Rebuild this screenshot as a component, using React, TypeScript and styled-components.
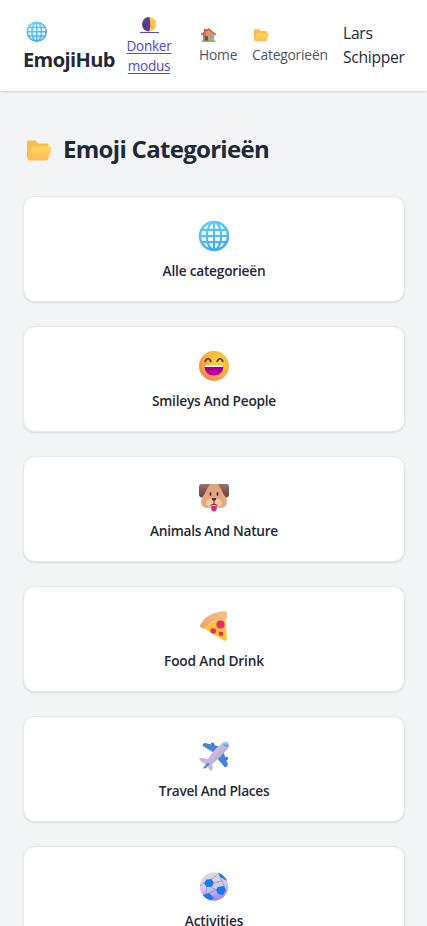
import React from "react";
import styled, { createGlobalStyle } from "styled-components";

const GlobalStyle = createGlobalStyle`
  *, *::before, *::after { box-sizing: border-box; }
  body {
    margin: 0;
    background: #f3f4f6;
    color: #1f2937;
    font-family: "Segoe UI", "Open Sans", "Noto Sans", sans-serif;
    font-size: 16px;
    line-height: 24px;
    overflow-x: hidden;
  }
`;

const Page = styled.div`
  height: 926px;
  overflow: hidden;
  background: #f3f4f6;
`;

const Header = styled.header`
  display: flex;
  align-items: center;
  height: 91px;
  padding: 0 20px 0 23px;
  background: #fff;
  box-shadow: 0 1px 3px rgba(0, 0, 0, 0.1), 0 1px 2px rgba(0, 0, 0, 0.05);
`;

const Brand = styled.a`
  display: flex;
  flex-direction: column;
  width: 92px;
  margin-right: 11px;
  font-size: 20px;
  line-height: 28px;
  font-weight: 700;
  letter-spacing: -0.58px;
  white-space: nowrap;
`;

const EmojiLine = styled.span<{ $h: number; $left?: number; $top?: number }>`
  display: flex;
  align-items: center;
  height: ${(p) => p.$h}px;
  padding-left: ${(p) => p.$left ?? 0}px;
  padding-top: ${(p) => p.$top ?? 0}px;
`;

const ThemeToggle = styled.button`
  display: flex;
  flex-direction: column;
  align-items: center;
  width: 46px;
  margin: 0 27px 0 0;
  padding: 0;
  border: 0;
  background: none;
  color: #4f46e5;
  font: inherit;
  font-size: 13.6px;
  line-height: 20px;
  letter-spacing: -0.3px;
  text-decoration: underline;
  text-underline-offset: 2px;
`;

const MoonLine = styled.span`
  display: flex;
  justify-content: center;
  align-items: flex-end;
  width: 19px;
  height: 17px;
  margin-bottom: 3px;
  border-bottom: 1px solid #4f46e5;
`;

const NavLink = styled.a<{ $w: number; $gap: number }>`
  display: flex;
  flex-direction: column;
  width: ${(p) => p.$w}px;
  margin: -2px ${(p) => p.$gap}px 0 0;
  color: #4b5563;
  font-size: 13.8px;
  line-height: 20px;
  letter-spacing: -0.2px;
  white-space: nowrap;
`;

const UserName = styled.span`
  width: 64px;
  margin-top: -1px;
  font-size: 15.7px;
  letter-spacing: -0.3px;
`;

const Main = styled.main`
  padding: 40px 22px 24px 23px;
`;

const Title = styled.h1`
  display: flex;
  align-items: center;
  gap: 11px;
  margin: 0 0 29px;
  padding-left: 4px;
  height: 36px;
  font-size: 24px;
  line-height: 36px;
  font-weight: 700;
  letter-spacing: -0.7px;
  white-space: nowrap;
`;

const TitleIcon = styled.span`
  padding-top: 3px;
`;

const CardList = styled.div`
  display: grid;
  gap: 24px;
`;

const Card = styled.button`
  display: flex;
  flex-direction: column;
  align-items: center;
  width: 100%;
  height: 106px;
  padding: 23px 0 0;
  border: 1px solid #e5e7eb;
  border-radius: 12px;
  background: #fff;
  box-shadow: 0 1px 2px rgba(0, 0, 0, 0.1);
  color: #1f2937;
  font: inherit;
`;

const CardLabel = styled.span<{ $track: number }>`
  margin-top: 9px;
  font-size: 13.7px;
  line-height: 20px;
  font-weight: 600;
  letter-spacing: ${(p) => p.$track}px;
`;

const Icon = styled.svg<{ $w: number; $h?: number }>`
  display: block;
  flex: none;
  width: ${(p) => p.$w}px;
  height: ${(p) => p.$h ?? p.$w}px;
`;

type Size = { size: number };

const Globe = ({ size }: Size) => (
  <Icon $w={size} viewBox="0 0 32 32">
    <defs>
      <linearGradient id="globe" gradientUnits="userSpaceOnUse" x1="10" y1="0" x2="22" y2="32">
        <stop offset="0" stopColor="#5fd2fb" />
        <stop offset="1" stopColor="#3ba7f3" />
      </linearGradient>
    </defs>
    <circle cx="16" cy="16" r="14" fill="#fff" stroke="url(#globe)" strokeWidth="2.6" />
    <g fill="none" stroke="url(#globe)" strokeWidth="2.2">
      <ellipse cx="16" cy="16" rx="7.2" ry="13.8" />
      <path d="M16 2V30M2 16H30M4 9.8H28M4 22.2H28" />
    </g>
  </Icon>
);

const Folder = ({ size }: Size) => (
  <Icon $w={size} $h={size * 0.84} viewBox="0 0 25 21">
    <defs>
      <linearGradient id="folder" x1="0" y1="0" x2="0" y2="1">
        <stop offset="0" stopColor="#ffda50" />
        <stop offset="1" stopColor="#ffb85e" />
      </linearGradient>
    </defs>
    <path d="M0 2Q0 .5 1.5 .5H8.5L11.5 3.5H20Q21.5 3.5 21.5 5V18H1Q0 18 0 16Z" fill="#fcbc4c" />
    <path d="M6.5 6.5H23.2Q25 6.5 24.5 8.3L21.2 19Q20.7 20.5 19 20.5H1.8Q.2 20.5.7 18.5L4.3 8.2Q4.8 6.5 6.5 6.5Z" fill="url(#folder)" />
  </Icon>
);

const Moon = () => (
  <Icon $w={14.5} viewBox="0 0 14 14">
    <circle cx="7" cy="7" r="7" fill="#ffc85b" />
    <path d="M7 0A7 7 0 0 0 7 14Q8.2 10 8.1 7Q8 3 7 0" fill="#5c4089" />
    <circle cx="11" cy="5" r="1" fill="#f0ad50" />
    <circle cx="9.6" cy="10" r="1.2" fill="#f2b252" />
    <circle cx="3.6" cy="8.5" r="1" fill="#49327b" />
  </Icon>
);

const House = () => (
  <Icon $w={15} $h={14} viewBox="0 0 15 14">
    <path d="M3 1H5V5H3Z" fill="#b55349" />
    <path d="M2 6L7.5 1.3L13 6V13H2Z" fill="#d69b70" />
    <path d="M2 6L5 4V13H2Z" fill="#b97c5d" />
    <path d="M.8 6.5L7.5 1L14.2 6.5" fill="none" stroke="#e0654a" strokeWidth="1.8" strokeLinecap="round" />
    <path d="M4 8H7V13H4Z" fill="#7a4d48" />
    <path d="M8.8 7H12V10H8.8Z" fill="#3cb9f5" />
    <path d="M.5 13.2H14.5" stroke="#50bd68" strokeWidth="1.3" />
  </Icon>
);

const Smiley = () => (
  <Icon $w={32} viewBox="0 0 32 32">
    <defs>
      <radialGradient id="face" cx=".65" cy=".35" r=".75">
        <stop offset="0" stopColor="#ffd13f" />
        <stop offset=".65" stopColor="#faaf35" />
        <stop offset="1" stopColor="#ef7b61" />
      </radialGradient>
      <linearGradient id="mouth" x1="0" y1="0" x2="0" y2="1">
        <stop offset="0" stopColor="#8d008c" />
        <stop offset="1" stopColor="#cf00a4" />
      </linearGradient>
    </defs>
    <circle cx="16" cy="16" r="15" fill="url(#face)" />
    <path d="M7.2 11.2Q10 6.2 12.8 11.2M19.2 11.2Q22 6.2 24.8 11.2" fill="none" stroke="#553b3b" strokeWidth="1.8" strokeLinecap="round" />
    <path d="M6.5 15.5H25.5Q25.5 25.5 16 25.5T6.5 15.5Z" fill="url(#mouth)" />
    <path d="M6.8 15.2H25.2V17H6.8Z" fill="#fff" />
  </Icon>
);

const Dog = () => (
  <Icon $w={32} viewBox="0 0 32 32">
    <defs>
      <linearGradient id="dog" x1="0" y1="0" x2="0" y2="1">
        <stop offset="0" stopColor="#e0a27e" />
        <stop offset="1" stopColor="#eaa982" />
      </linearGradient>
      <linearGradient id="ear" x1="0" y1="0" x2="0" y2="1">
        <stop offset="0" stopColor="#99706a" />
        <stop offset="1" stopColor="#68413d" />
      </linearGradient>
    </defs>
    <path d="M9 4H23Q27 5 27.5 12L29 22Q28.5 28 22 28H10Q3.5 28 3 22L5 11Q6 4 9 4Z" fill="url(#dog)" />
    <path d="M3 4H12L9 9Q7 14 4 17.5Q1 17.5 1 14V6.5Q1 4 3 4ZM29 4H20L23 9Q25 14 28 17.5Q31 17.5 31 14V6.5Q31 4 29 4Z" fill="url(#ear)" />
    <ellipse cx="16" cy="23" rx="8" ry="5" fill="#f6c99d" />
    <ellipse cx="12.5" cy="14" rx="1" ry="2" fill="#472e31" />
    <ellipse cx="19.5" cy="14" rx="1" ry="2" fill="#472e31" />
    <path d="M13.2 26H18.8V28.5Q18.5 31.5 16 31.5T13.2 28.5Z" fill="#dc2b86" />
    <path d="M13.8 18H18.2Q18.5 20.8 16 20.8T13.8 18Z" fill="#4d3436" />
    <path d="M16 20V24M12.5 26Q13.2 24.2 16 24.2T19.5 26" fill="none" stroke="#4d3436" />
  </Icon>
);

const Pizza = () => (
  <Icon $w={32} viewBox="0 0 32 32">
    <defs>
      <linearGradient id="crust" x1="0" y1="1" x2="1" y2="0">
        <stop offset="0" stopColor="#e6a172" />
        <stop offset="1" stopColor="#f8c38c" />
      </linearGradient>
    </defs>
    <path d="M4 17L27 6.5L29 29Q28.7 31.3 26 30.7Z" fill="#ffc437" />
    <path d="M2 15.5Q8 3 25.5 1Q29 1 29 3V8.5Q14 9 5.5 18.5Q2 18 2 15.5Z" fill="url(#crust)" />
    <circle cx="22.5" cy="14.5" r="4.1" fill="#ed2870" />
    <circle cx="15.2" cy="21" r="2.8" fill="#ed2870" />
    <circle cx="23" cy="23.8" r="2.3" fill="#ed2870" />
  </Icon>
);

const Plane = () => (
  <Icon $w={32} viewBox="0 0 32 32">
    <defs>
      <linearGradient id="fuselage" x1="0" y1="0" x2="1" y2="1">
        <stop offset=".3" stopColor="#d3c4e0" />
        <stop offset="1" stopColor="#a995c0" />
      </linearGradient>
    </defs>
    <path d="M13 3L15.5 2.5L16.5 5L14 6ZM27 17.5L29.5 16.5L30 19.5L27 20.5Z" fill="#626a7b" />
    <path d="M7 3Q4 3 5 6L17 13.5L22 6.5ZM25 11L29.8 24Q30 27.5 26.5 27L18 17Z" fill="#3f83da" />
    <path d="M1 18L6 18L11 20L8 24Q2 22 1 18ZM9 24L12.5 21.5L15 27L14 31Q10 30 9 24Z" fill="#c9b5d4" />
    <path d="M24 3Q28 .5 30.5 3Q32 6 29.5 9Q23 17 13 25Q9 27 7 24Q12 13 24 3Z" fill="url(#fuselage)" />
    <path d="M5 28L10 22.5L11.5 24L8 28Q6 29 5 28Z" fill="#348be1" />
    <path d="M25.5 4.2L27.5 6M28 4.6L30 6.6" stroke="#36b5ec" strokeWidth="1.8" />
  </Icon>
);

const Ball = () => (
  <Icon $w={32} viewBox="0 0 32 32">
    <defs>
      <linearGradient id="ball" x1=".35" y1="0" x2=".6" y2="1">
        <stop offset="0" stopColor="#dcdcdc" />
        <stop offset=".5" stopColor="#d5c9ec" />
        <stop offset="1" stopColor="#9c7df3" />
      </linearGradient>
      <clipPath id="ballClip"><circle cx="16" cy="16.5" r="14.2" /></clipPath>
    </defs>
    <g clipPath="url(#ballClip)">
      <path d="M1 2H31V31H1Z" fill="url(#ball)" />
      <path d="M8.5 9.5L13.5 9L16 13L13.5 17L8.5 17L6 13ZM19 1H29V11L22 7ZM20 17L26 16L28 20L25 25L20 24L18 20ZM5 25L11 23L16 28L12 31H7Z" fill="#1b79f0" />
      <path d="M2 16L6 13M13 17L18 20M13.5 9L19 5M16 13L24 11L26 16M8.5 17L8 24M11 23L18 20M25 25L22 30M24 11L22 7" fill="none" stroke="#9690aa" strokeWidth=".8" />
    </g>
  </Icon>
);

const categories = [
  { label: "Alle categorieën", icon: <Globe size={32} />, track: -0.22 },
  { label: "Smileys And People", icon: <Smiley />, track: -0.24 },
  { label: "Animals And Nature", icon: <Dog />, track: -0.28 },
  { label: "Food And Drink", icon: <Pizza />, track: -0.16 },
  { label: "Travel And Places", icon: <Plane />, track: -0.29 },
  { label: "Activities", icon: <Ball />, track: -0.16 },
];

export default function App() {
  return (
    <Page>
      <GlobalStyle />
      <Header>
        <Brand>
          <EmojiLine $h={28} $left={2.5} $top={1}><Globe size={21.5} /></EmojiLine>
          EmojiHub
        </Brand>
        <ThemeToggle>
          <MoonLine><Moon /></MoonLine>
          <span>Donker</span>
          <span>modus</span>
        </ThemeToggle>
        <NavLink $w={38} $gap={15}>
          <EmojiLine $h={20} $left={2}><House /></EmojiLine>
          Home
        </NavLink>
        <NavLink $w={76} $gap={15}>
          <EmojiLine $h={20} $left={2} $top={2}><Folder size={15} /></EmojiLine>
          Categorieën
        </NavLink>
        <UserName>Lars Schipper</UserName>
      </Header>
      <Main>
        <Title><TitleIcon><Folder size={25} /></TitleIcon>Emoji Categorieën</Title>
        <CardList>
          {categories.map((c) => (
            <Card key={c.label}>
              {c.icon}
              <CardLabel $track={c.track}>{c.label}</CardLabel>
            </Card>
          ))}
        </CardList>
      </Main>
    </Page>
  );
}
